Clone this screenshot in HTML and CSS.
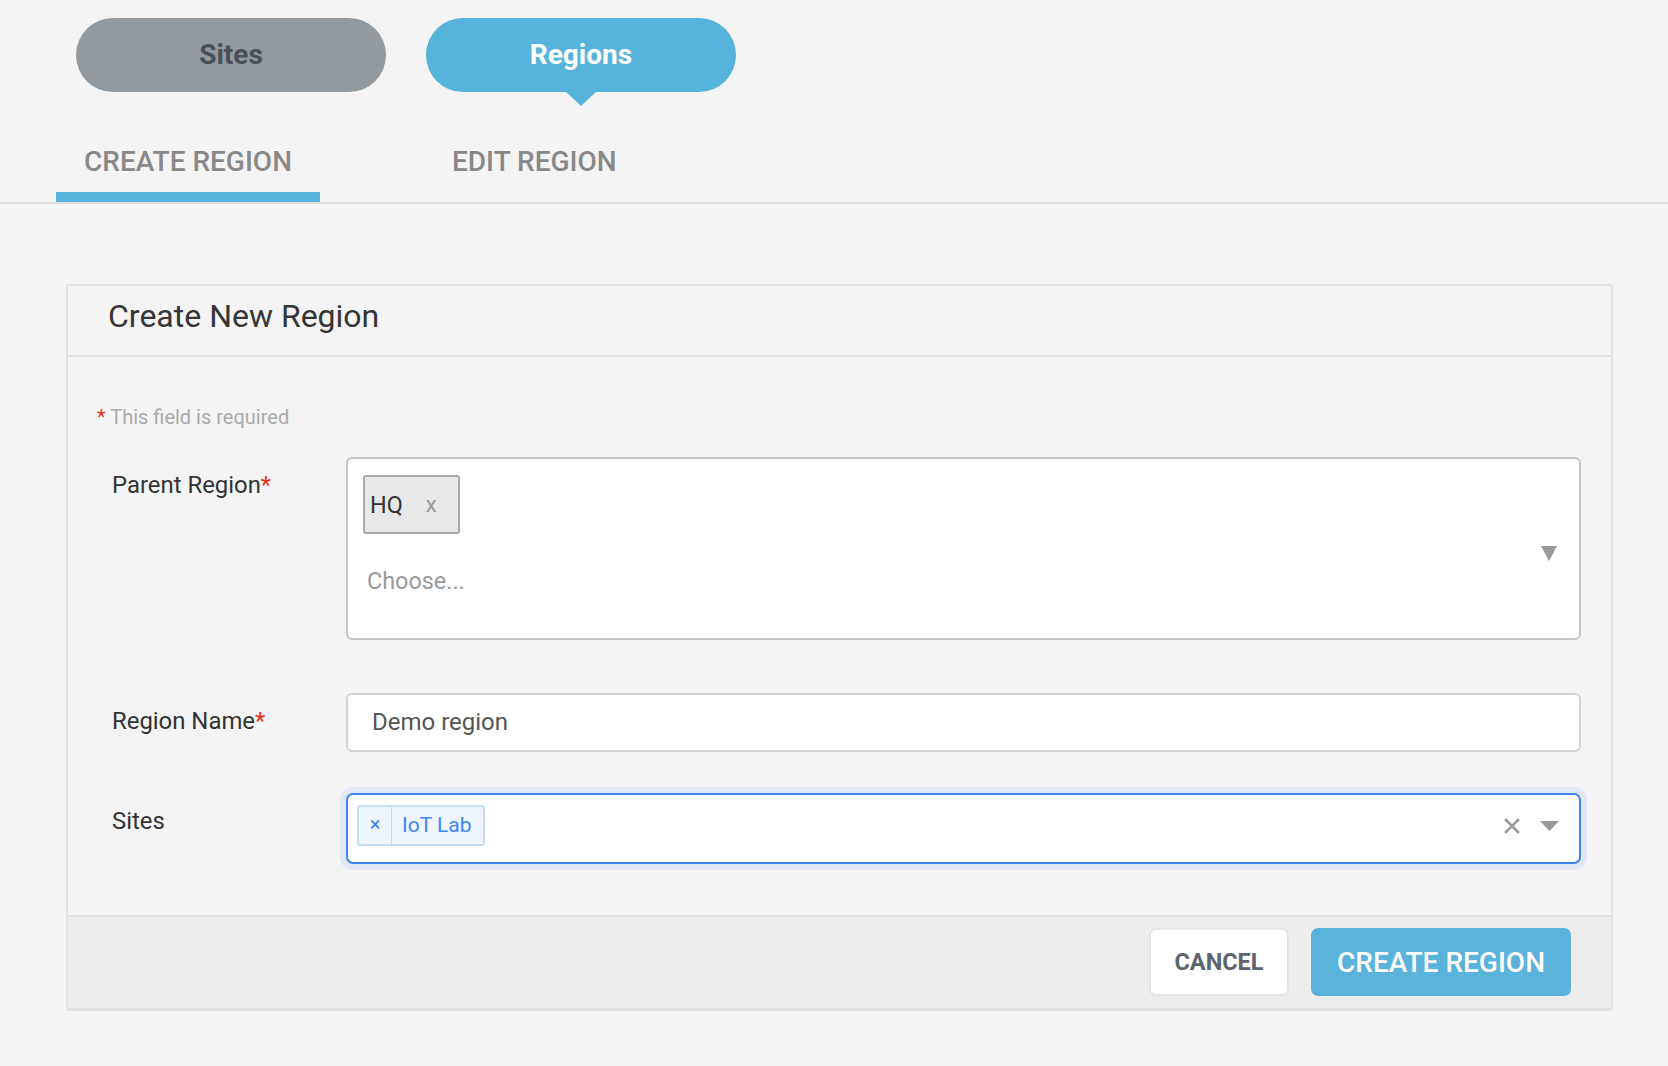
FILE: index.html
```html
<!DOCTYPE html>
<html lang="en">
<head>
<meta charset="utf-8">
<title>Create Region</title>
<link rel="stylesheet" href="styles.css">
</head>
<body>
<div class="switcher">
  <a class="pill pill-sites">Sites</a>
  <a class="pill pill-regions">Regions</a>
</div>
<nav class="tabs">
  <a class="tab active">CREATE REGION</a>
  <a class="tab">EDIT REGION</a>
</nav>
<main class="content">
  <section class="panel">
    <header class="panel-header">
      <h2 class="panel-title">Create New Region</h2>
    </header>
    <div class="panel-body">
      <p class="required-note"><span class="star">*</span> This field is required</p>
      <div class="row row-parent">
        <label class="label">Parent Region<span class="star">*</span></label>
        <div class="multi-box">
          <div class="multi-main">
            <span class="hq-chip"><span class="hq-text">HQ</span><span class="hq-x">x</span></span>
            <span class="choose">Choose...</span>
          </div>
          <svg class="multi-arrow" width="16" height="15" viewBox="0 0 16 15"><polygon points="0,0 16,0 8,15" fill="#999"/></svg>
        </div>
      </div>
      <div class="row row-name">
        <label class="label">Region Name<span class="star">*</span></label>
        <div class="text-input">Demo region</div>
      </div>
      <div class="row row-sites">
        <label class="label">Sites</label>
        <div class="select-box">
          <div class="site-chip"><span class="site-chip-x">×</span><span class="site-chip-label">IoT Lab</span></div>
          <div class="select-icons">
            <svg class="clear-icon" width="16" height="16" viewBox="0 0 16 16"><path d="M2 2 L14 14 M14 2 L2 14" stroke="#999" stroke-width="2.6" stroke-linecap="square"/></svg>
            <svg class="caret-icon" width="19" height="10" viewBox="0 0 19 10"><polygon points="0,0 19,0 9.5,10" fill="#999"/></svg>
          </div>
        </div>
      </div>
    </div>
    <footer class="panel-footer">
      <button class="btn btn-cancel">CANCEL</button>
      <button class="btn btn-create">CREATE REGION</button>
    </footer>
  </section>
</main>
</body>
</html>
```
FILE: styles.css
```css
* { box-sizing: border-box; }
html, body { margin: 0; padding: 0; }
body {
  background: #f4f4f4;
  font-family: Roboto, "Noto Sans", "Liberation Sans", sans-serif;
  color: #333;
  width: 1668px;
  min-height: 1066px;
}

.switcher {
  display: flex;
  gap: 40px;
  padding: 18px 0 0 76px;
}
.pill {
  display: block;
  width: 310px;
  height: 74px;
  border-radius: 37px;
  text-align: center;
  line-height: 74px;
  font-size: 28px;
  font-weight: 700;
}
.pill-sites { background: #929a9f; color: #4a4f57; }
.pill-regions { background: #56b3db; color: #fff; position: relative; }
.pill-regions::after {
  content: "";
  position: absolute;
  left: 50%;
  top: 73px;
  margin-left: -16px;
  border-left: 16px solid transparent;
  border-right: 16px solid transparent;
  border-top: 15px solid #56b3db;
}

.tabs {
  display: flex;
  gap: 104px;
  margin-top: 53px;
  padding-left: 56px;
  border-bottom: 2px solid #dedede;
}
.tab {
  display: block;
  padding: 0 28px 13px;
  line-height: 34px;
  font-size: 28px;
  font-weight: 500;
  color: #888;
  border-bottom: 10px solid transparent;
}
.tab.active { border-bottom-color: #56b3db; }

.content {
  padding: 80px 55px 0 66px;
}
.panel {
  border: 2px solid #e2e2e2;
  border-bottom-width: 3px;
  border-radius: 3px;
  background: #f4f4f4;
}
.panel-header {
  padding: 12px 40px 21px;
  border-bottom: 2px solid #e0e0e0;
}
.panel-title {
  margin: 0;
  font-size: 32px;
  line-height: 36px;
  font-weight: 400;
  color: #353535;
}

.panel-body {
  padding: 49px 30px 51px 29px;
}
.required-note {
  margin: 0 0 29px;
  font-size: 20px;
  line-height: 22px;
  color: #aaa;
}
.star { color: #e8311f; }

.row {
  display: flex;
  align-items: flex-start;
}
.row-parent { margin-bottom: 53px; }
.row-name { margin-bottom: 41px; }
.label {
  width: 249px;
  flex: none;
  padding: 14px 0 0 15px;
  font-size: 23.9px;
  line-height: 28px;
  color: #333;
}

.multi-box {
  flex: 1;
  height: 183px;
  background: #fff;
  border: 2px solid #c4c4c4;
  border-radius: 6px;
  display: flex;
  padding: 16px 22px 0 15px;
  align-items: flex-start;
}
.multi-main {
  flex: 1;
  display: flex;
  flex-direction: column;
  align-items: flex-start;
}
.hq-chip {
  display: flex;
  align-items: center;
  height: 59px;
  width: 97px;
  border: 2px solid #a9a9a9;
  border-radius: 3px;
  background: #e8e8e8;
  padding-left: 5px;
  font-size: 23.4px;
}
.hq-text { color: #333; }
.hq-x { color: #999; margin-left: 23px; font-size: 22px; }
.choose {
  margin: 33px 0 0 4px;
  font-size: 23.4px;
  line-height: 28px;
  color: #999;
}
.multi-arrow { margin-top: 71px; flex: none; }

.text-input {
  flex: 1;
  height: 59px;
  background: #fff;
  border: 2px solid #d0d3d8;
  border-radius: 6px;
  padding-left: 24px;
  font-size: 24px;
  line-height: 55px;
  color: #555;
}

.select-box {
  flex: 1;
  height: 71px;
  background: #fff;
  border: 2px solid #3d84f4;
  border-radius: 7px;
  box-shadow: 0 0 0 6px #e1e8f3;
  display: flex;
  align-items: flex-start;
  padding: 10px 20px 0 9px;
}
.site-chip {
  display: flex;
  height: 41px;
  border: 2px solid #c5dcfb;
  border-radius: 3px;
  background: #eef5ff;
  color: #3e86f4;
}
.site-chip-x {
  width: 33px;
  border-right: 1px solid #c5dcfb;
  text-align: center;
  font-size: 20px;
  line-height: 35px;
  color: #3b7fe8;
}
.site-chip-label {
  padding: 0 11px 0 10px;
  font-size: 21px;
  line-height: 37px;
}
.select-icons {
  margin-left: auto;
  display: flex;
  align-items: center;
  gap: 20px;
  height: 41px;
}

.panel-footer {
  background: #ededed;
  border-top: 2px solid #e0e0e0;
  display: flex;
  justify-content: flex-end;
  gap: 22px;
  padding: 11px 40px 12px;
}
.btn {
  height: 68px;
  border-radius: 7px;
  font-family: Roboto, "Noto Sans", "Liberation Sans", sans-serif;
  cursor: pointer;
}
.btn-cancel {
  width: 140px;
  background: #fff;
  border: 2px solid #e4e4e4;
  color: #5c6470;
  font-size: 23.5px;
  font-weight: 700;
}
.btn-create {
  width: 260px;
  background: #59b3da;
  border: none;
  color: #fff;
  font-size: 28px;
  font-weight: 500;
}
```
